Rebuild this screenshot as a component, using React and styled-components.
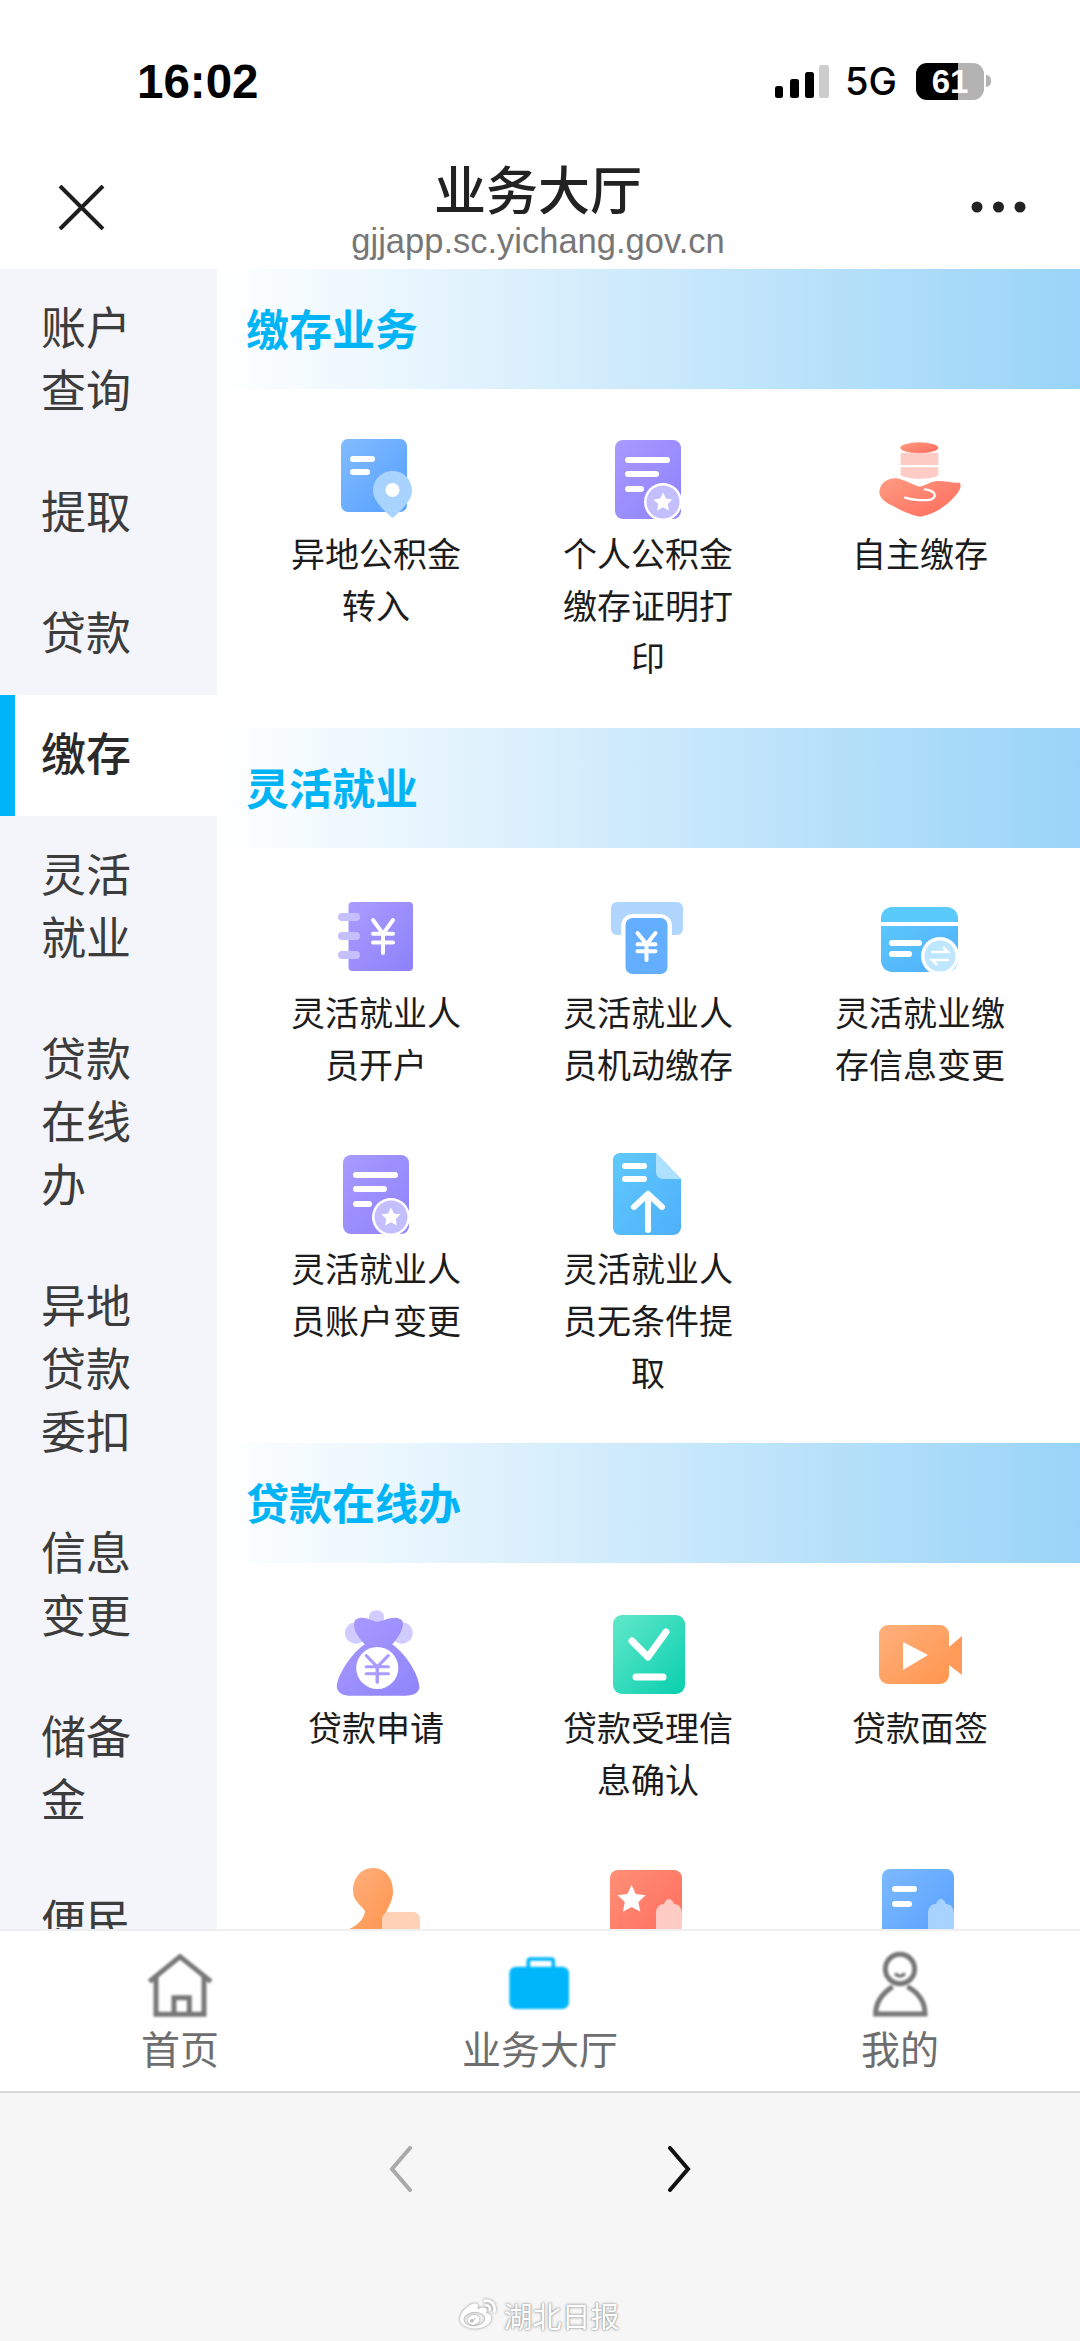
import styled, {createGlobalStyle} from "styled-components";
import {FaWeibo} from "react-icons/fa";

const sideItems = [
  {label: "账户查询"},
  {label: "提取"},
  {label: "贷款"},
  {label: "缴存", active: true},
  {label: "灵活就业"},
  {label: "贷款在线办"},
  {label: "异地贷款委扣"},
  {label: "信息变更"},
  {label: "储备金"},
  {label: "便民"},
];

const Grad = ({id, from, to}) => (
  <defs>
    <linearGradient id={id} x1="0" y1="0" x2="1" y2="1">
      <stop offset="0" stopColor={from}/>
      <stop offset="1" stopColor={to}/>
    </linearGradient>
  </defs>
);

const Yen = ({cx, top, bottom, w, color, sw = 5}) => {
  const mid = top + (bottom - top) * 0.42;
  const bar2 = top + (bottom - top) * 0.68;
  return (
    <path
      d={`M${cx - w} ${top}L${cx} ${mid}L${cx + w} ${top}M${cx - w} ${mid}H${cx + w}M${cx - w} ${bar2}H${cx + w}M${cx} ${mid}V${bottom}`}
      fill="none"
      stroke={color}
      strokeWidth={sw}
      strokeLinecap="round"
      strokeLinejoin="round"
    />
  );
};

const Bars = ({lines, color = "#fff", h = 6}) => lines.map(([x1, x2, y]) => (
  <line key={y} x1={x1} x2={x2} y1={y} y2={y} stroke={color} strokeWidth={h} strokeLinecap="round"/>
));

const PinDoc = () => (
  <IconSvg viewBox="0 0 100 90">
    <Grad id="pd" from="#82bcff" to="#559fff"/>
    <rect x="15" y="0" width="66" height="73" rx="7" fill="url(#pd)"/>
    <Bars lines={[[27, 46, 20], [27, 41, 33]]}/>
    <path d="M66.5 32C78 32 86 41 86 52C86 61 76 71 66.5 79C57 71 47 61 47 52C47 41 55 32 66.5 32Z" fill="#a9d3ff"/>
    <circle cx="66.5" cy="51" r="7" fill="#fff"/>
  </IconSvg>
);

const StarDoc = ({id = "sd"}) => (
  <IconSvg viewBox="0 0 100 90">
    <Grad id={id} from="#a79aff" to="#8f82fb"/>
    <rect x="17" y="1" width="66" height="79" rx="8" fill={`url(#${id})`}/>
    <Bars lines={[[30, 69, 21], [30, 58, 35], [30, 43, 50]]}/>
    <circle cx="65" cy="63" r="19" fill="#fff"/>
    <circle cx="65" cy="63" r="16.5" fill="#c3bfff"/>
    <path d="M65 53.5l2.9 6 6.6.9-4.8 4.6 1.2 6.5-5.9-3.2-5.9 3.2 1.2-6.5-4.8-4.6 6.6-.9Z" fill="#fff"/>
  </IconSvg>
);

const HandDb = () => (
  <IconSvg viewBox="0 0 100 90">
    <Grad id="hd" from="#ff9c82" to="#ff6a5c"/>
    <g transform="translate(0,-9) scale(.3333)">
      <path d="M92 68H205V105H92Z" fill="#ffcbc5"/>
      <path d="M92 112H205V135C190 150 110 150 92 135Z" fill="#ffcbc5"/>
      <ellipse cx="148" cy="53" rx="57" ry="16" fill="url(#hd)"/>
      <path d="M28 185C30 160 50 146 75 145C100 146 125 164 150 170C165 168 180 156 195 154C215 150 245 160 270 158C277 175 262 192 247 207C227 228 195 252 150 260C115 254 85 236 65 226C40 214 28 200 28 185Z" fill="url(#hd)"/>
      <path d="M105 203C130 212 165 212 185 208C200 200 198 182 165 178" fill="none" stroke="#fff" strokeWidth="7" strokeLinecap="round"/>
    </g>
  </IconSvg>
);

const Notebook = () => (
  <IconSvg viewBox="0 0 100 90">
    <Grad id="nb" from="#a99cff" to="#8e81fa"/>
    <rect x="22.5" y="4" width="64.5" height="69" rx="4" fill="url(#nb)"/>
    <Bars lines={[[16, 30, 19], [16, 30, 38], [16, 30, 57]]} color="#c5bffd" h={8}/>
    <Yen cx={57} top={22} bottom={55} w={10} color="#fff" sw={4}/>
  </IconSvg>
);

const AtmCash = () => (
  <IconSvg viewBox="0 0 100 90">
    <rect x="13" y="4" width="72" height="33" rx="6" fill="#b0d6ff"/>
    <rect x="23" y="16" width="51" height="60" rx="12" fill="#fff"/>
    <rect x="27.5" y="20" width="42" height="56" rx="7" fill="#64aeff"/>
    <Yen cx={48.5} top={35} bottom={62} w={9} color="#fff" sw={4}/>
  </IconSvg>
);

const CardSwap = () => (
  <IconSvg viewBox="0 0 100 90">
    <Grad id="cs" from="#5cc6fb" to="#4fb0fb"/>
    <path d="M11 24V20C11 14 16 9 22 9H77C83 9 88 14 88 20V24Z" fill="#5ac9fb"/>
    <path d="M11 28H88V62C88 69 83 74 77 74H22C16 74 11 69 11 62Z" fill="url(#cs)"/>
    <Bars lines={[[22, 49, 45], [22, 39, 56]]}/>
    <circle cx="70" cy="58" r="19" fill="#fff"/>
    <circle cx="70" cy="58" r="15.5" fill="#bfe6ff"/>
    <path d="M61 54H78L73 49M79 62H62L67 67" fill="none" stroke="#fff" strokeWidth="2.5"/>
  </IconSvg>
);

const UploadDoc = () => (
  <IconSvg viewBox="0 0 100 90">
    <Grad id="ud" from="#5fc9fb" to="#4fb0fb"/>
    <path d="M22 -1H58L83 25V73C83 78 79 81 75 81H22C18 81 15 78 15 73V6C15 2 18 -1 22 -1Z" fill="url(#ud)"/>
    <path d="M58 -1L83 25H66C61 25 58 22 58 18Z" fill="#aee0ff"/>
    <Bars lines={[[27, 46, 12], [27, 46, 25]]}/>
    <path d="M36 53L50 40L64 53M50 41V76" fill="none" stroke="#fff" strokeWidth="6" strokeLinecap="round" strokeLinejoin="round"/>
  </IconSvg>
);

const MoneyBag = () => (
  <IconSvg viewBox="0 0 100 90">
    <Grad id="mb" from="#a99bff" to="#8f84fb"/>
    <g transform="translate(-8,-8) scale(.39,.3333)">
      <ellipse cx="97" cy="84" rx="28" ry="32" fill="#d0ccff"/>
      <ellipse cx="215" cy="84" rx="28" ry="32" fill="#d0ccff"/>
      <ellipse cx="150" cy="36" rx="20" ry="20" fill="#d0ccff"/>
      <path d="M95 45C115 28 135 48 152 50C170 48 195 28 215 45C225 65 205 100 190 118C225 145 262 215 260 250C255 268 240 272 225 272H85C65 272 50 265 48 245C50 210 85 145 120 118C105 100 85 70 95 45Z" fill="url(#mb)"/>
      <ellipse cx="152" cy="189" rx="54" ry="63" fill="#fff"/>
      <Yen cx={152} top={152} bottom={232} w={28} color="#a99bff" sw={9}/>
    </g>
  </IconSvg>
);

const CheckPad = () => (
  <IconSvg viewBox="0 0 100 90">
    <Grad id="cp" from="#62e8ca" to="#08cfae"/>
    <rect x="15" y="2" width="72" height="79" rx="9" fill="url(#cp)"/>
    <path d="M34 28L50 44L68 19" fill="none" stroke="#fff" strokeWidth="7" strokeLinecap="round" strokeLinejoin="round"/>
    <Bars lines={[[38, 65, 64]]} h={7}/>
  </IconSvg>
);

const VideoCam = () => (
  <IconSvg viewBox="0 0 100 90">
    <Grad id="vc" from="#ffb07c" to="#ff954f"/>
    <rect x="9" y="12" width="70" height="59" rx="9" fill="url(#vc)"/>
    <path d="M79 34L92 23V62L79 52Z" fill="#ff9a58"/>
    <path d="M33 29L58 42L33 57Z" fill="#fff"/>
  </IconSvg>
);

const Stamp = () => (
  <IconSvg viewBox="0 0 100 90">
    <Grad id="st" from="#ffb07c" to="#ff954f"/>
    <path d="M47 -1C60 -1 67 10 67 22C67 32 62 38 59 46V60H23C32 56 38 50 39 42C35 36 27 32 27 22C27 10 34 -1 47 -1Z" fill="url(#st)"/>
    <rect x="56" y="43" width="38" height="40" rx="7" fill="#ffd2b8"/>
  </IconSvg>
);

const StarCard = () => (
  <IconSvg viewBox="0 0 100 90">
    <Grad id="sc" from="#ff8f76" to="#ff6a5c"/>
    <rect x="12" y="1" width="72" height="79" rx="8" fill="url(#sc)"/>
    <path d="M33.6 16l4.2 9 9.8 1.2-7.2 6.8 1.9 9.8-8.7-4.8-8.7 4.8 1.9-9.8-7.2-6.8 9.8-1.2Z" fill="#fff"/>
    <path d="M58 80V44C58 38 62 35 66 35C67 32 69 30 71 30C73 30 75 32 76 35C81 35 84 39 84 45V80Z" fill="#ffcbc5"/>
  </IconSvg>
);

const BlueHandDoc = () => (
  <IconSvg viewBox="0 0 100 90">
    <Grad id="bh" from="#7cb9ff" to="#559fff"/>
    <rect x="12" y="0" width="72" height="80" rx="8" fill="url(#bh)"/>
    <Bars lines={[[25, 44, 20], [25, 39, 35]]}/>
    <path d="M58 80V44C58 38 62 35 66 35C67 32 69 30 71 30C73 30 75 32 76 35C81 35 84 39 84 45V80Z" fill="#a8d2ff"/>
  </IconSvg>
);

const sections = [
  {
    title: "缴存业务",
    items: [
      {id: "pin", label: "异地公积金转入", Icon: PinDoc},
      {id: "proof", label: "个人公积金缴存证明打印", Icon: () => <StarDoc id="sd1"/>},
      {id: "self", label: "自主缴存", Icon: HandDb},
    ],
  },
  {
    title: "灵活就业",
    items: [
      {id: "open", label: "灵活就业人员开户", Icon: Notebook},
      {id: "pay", label: "灵活就业人员机动缴存", Icon: AtmCash},
      {id: "info", label: "灵活就业缴存信息变更", Icon: CardSwap},
      {id: "acct", label: "灵活就业人员账户变更", Icon: () => <StarDoc id="sd2"/>},
      {id: "draw", label: "灵活就业人员无条件提取", Icon: UploadDoc},
    ],
  },
  {
    title: "贷款在线办",
    items: [
      {id: "apply", label: "贷款申请", Icon: MoneyBag},
      {id: "confirm", label: "贷款受理信息确认", Icon: CheckPad},
      {id: "sign", label: "贷款面签", Icon: VideoCam},
      {id: "stamp", Icon: Stamp},
      {id: "card", Icon: StarCard},
      {id: "hand", Icon: BlueHandDoc},
    ],
  },
];

export default function App() {
  return (
    <Page>
      <GlobalStyle/>
      <StatusBar>
        <Time>16:02</Time>
        <StatusRight>
          <svg width="54" height="33" viewBox="0 0 54 33">
            <rect x="0" y="21" width="8" height="12" rx="2.5" fill="#000"/>
            <rect x="15" y="14" width="9" height="19" rx="2.5" fill="#000"/>
            <rect x="30" y="7" width="9" height="26" rx="2.5" fill="#000"/>
            <rect x="44" y="0" width="10" height="33" rx="2.5" fill="#ccc"/>
          </svg>
          <Network>5G</Network>
          <Battery>61</Battery>
        </StatusRight>
      </StatusBar>

      <NavBar>
        <CloseIcon viewBox="0 0 47 45">
          <path d="M2 1L45 44M45 1L2 44" stroke="#1e1e1e" strokeWidth="4" fill="none"/>
        </CloseIcon>
        <TitleStack>
          <Title>业务大厅</Title>
          <Url>gjjapp.sc.yichang.gov.cn</Url>
        </TitleStack>
        <MoreIcon viewBox="0 0 55 12">
          <circle cx="6" cy="6" r="5.5" fill="#222"/>
          <circle cx="27.5" cy="6" r="5.5" fill="#222"/>
          <circle cx="49" cy="6" r="5.5" fill="#222"/>
        </MoreIcon>
      </NavBar>

      <Main>
        <Sidebar>
          {sideItems.map(item => (
            <SideItem key={item.label} active={item.active}>
              <SideLabel>{item.label}</SideLabel>
            </SideItem>
          ))}
        </Sidebar>
        <Content>
          {sections.map(section => (
            <section key={section.title}>
              <Banner>{section.title}</Banner>
              <Grid>
                {section.items.map(({id, label, Icon}) => (
                  <Cell key={id}>
                    <IconSlot><Icon/></IconSlot>
                    {label && <CellLabel>{label}</CellLabel>}
                  </Cell>
                ))}
              </Grid>
            </section>
          ))}
        </Content>
      </Main>

      <TabBar>
        <Tab>
          <TabIcon viewBox="0 0 100 80">
            <g transform="scale(.3333)" fill="none" stroke="#777" strokeWidth="15">
              <path d="M58 110L150 35L243 110"/>
              <path d="M78 92V208H222V92"/>
              <path d="M132 208V158H178V208"/>
            </g>
          </TabIcon>
          <TabLabel>首页</TabLabel>
        </Tab>
        <Tab>
          <TabIcon viewBox="0 0 100 80">
            <g transform="translate(5,0) scale(.3333)">
              <rect x="100" y="42" width="75" height="40" rx="6" fill="none" stroke="#00b6fb" strokeWidth="11"/>
              <rect x="43" y="65" width="179" height="127" rx="20" fill="#00b6fb"/>
            </g>
          </TabIcon>
          <TabLabel>业务大厅</TabLabel>
        </Tab>
        <Tab>
          <TabIcon viewBox="0 0 100 80">
            <g transform="translate(10,0) scale(.3333)" fill="none" stroke="#777" strokeWidth="15">
              <circle cx="120" cy="72" r="44"/>
              <path d="M105 85Q120 102 135 85" strokeWidth="10"/>
              <path d="M98 125C75 140 47 165 47 207H195C195 165 170 140 142 125"/>
            </g>
          </TabIcon>
          <TabLabel>我的</TabLabel>
        </Tab>
      </TabBar>

      <BrowserBar>
        <Chevron viewBox="0 0 24 46">
          <path d="M21 2L3 23L21 44" stroke="#aaa" strokeWidth="4" fill="none" strokeLinecap="round"/>
        </Chevron>
        <Chevron viewBox="0 0 24 46">
          <path d="M3 2L21 23L3 44" stroke="#111" strokeWidth="4" fill="none" strokeLinecap="round"/>
        </Chevron>
        <Watermark>
          <FaWeibo size={36}/>
          <span>湖北日报</span>
        </Watermark>
      </BrowserBar>
    </Page>
  );
}

const GlobalStyle = createGlobalStyle`
  html, body {
    margin: 0;
    padding: 0;
    background: #fff;
  }
  * {
    box-sizing: border-box;
  }
  section {
    display: block;
  }
`;

const Page = styled.div`
  width: 1080px;
  height: 2341px;
  display: flex;
  flex-direction: column;
  overflow: hidden;
  font-family: "Noto Sans CJK SC", "Liberation Sans", sans-serif;
  color: #222;
`;

const StatusBar = styled.div`
  height: 120px;
  padding: 42px 96px 0 137px;
  display: flex;
  justify-content: space-between;
  align-items: center;
  flex-shrink: 0;
`;

const Time = styled.div`
  font-family: "Liberation Sans", sans-serif;
  font-weight: 700;
  font-size: 47.5px;
  color: #000;
`;

const StatusRight = styled.div`
  display: flex;
  align-items: center;
  gap: 19px;
`;

const Network = styled.div`
  margin-left: -3px;
  font-family: Inter, sans-serif;
  font-weight: 500;
  font-size: 38px;
  color: #000;
`;

const Battery = styled.div`
  position: relative;
  width: 68px;
  height: 37px;
  border-radius: 11px;
  background: linear-gradient(90deg, #000 62%, #b3b3b3 62%);
  color: #fff;
  font-family: "Liberation Sans", sans-serif;
  font-weight: 700;
  font-size: 33px;
  line-height: 37px;
  text-align: center;

  &::after {
    content: "";
    position: absolute;
    right: -7px;
    top: 12px;
    width: 5px;
    height: 12px;
    border-radius: 0 6px 6px 0;
    background: #b3b3b3;
  }
`;

const NavBar = styled.div`
  height: 149px;
  padding: 0 58px 0 54px;
  display: grid;
  grid-template-columns: 1fr auto 1fr;
  flex-shrink: 0;
`;

const CloseIcon = styled.svg`
  width: 47px;
  height: 45px;
  margin: 65px 0 0 4px;
`;

const MoreIcon = styled.svg`
  width: 55px;
  height: 12px;
  margin: 81px -4px 0 0;
  justify-self: end;
`;

const TitleStack = styled.div`
  padding-top: 38px;
  display: flex;
  flex-direction: column;
  align-items: center;
`;

const Title = styled.div`
  font-size: 52px;
  font-weight: 500;
  line-height: 60px;
  color: #222;
`;

const Url = styled.div`
  margin-top: 3px;
  font-family: "Liberation Sans", sans-serif;
  font-size: 34.5px;
  line-height: 40px;
  color: #777;
`;

const Main = styled.div`
  height: 1660px;
  display: flex;
  overflow: hidden;
  flex-shrink: 0;
`;

const Sidebar = styled.div`
  width: 217px;
  flex-shrink: 0;
  background: #f3f5fa;
`;

const SideItem = styled.div.withConfig({shouldForwardProp: p => p !== "active"})`
  position: relative;
  padding: 25px 0 33px 41px;
  background: ${({active}) => active ? "#fff" : "transparent"};
  color: ${({active}) => active ? "#2a2a2a" : "#3c3c3c"};
  font-weight: ${({active}) => active ? 500 : 400};

  &::before {
    content: "";
    display: ${({active}) => active ? "block" : "none"};
    position: absolute;
    left: 0;
    top: 0;
    bottom: 0;
    width: 15px;
    background: #00b4f8;
  }
`;

const SideLabel = styled.div`
  width: 100px;
  font-size: 45px;
  line-height: 63px;
`;

const Content = styled.div`
  flex: 1;
  min-width: 0;
`;

const Banner = styled.div`
  height: 120px;
  padding: 0 0 4px 29px;
  display: flex;
  align-items: center;
  background: linear-gradient(90deg, #fff 0%, #99d4f8 100%);
  color: #00b4f5;
  font-size: 43px;
  font-weight: 700;
`;

const Grid = styled.div`
  padding: 50px 24px 45px 23px;
  display: grid;
  grid-template-columns: repeat(3, 272px);
  row-gap: 64px;
`;

const Cell = styled.div`
  display: flex;
  flex-direction: column;
  align-items: center;
`;

const IconSlot = styled.div`
  width: 100px;
  height: 88px;
`;

const IconSvg = styled.svg`
  display: block;
  width: 100px;
  height: 90px;
  overflow: visible;
  filter: blur(0.5px);
`;

const CellLabel = styled.div`
  width: 176px;
  font-size: 34px;
  line-height: 52px;
  text-align: center;
  color: #1c1c1c;
`;

const TabBar = styled.div`
  height: 162px;
  border-top: 2px solid #efefef;
  display: grid;
  grid-template-columns: repeat(3, 1fr);
  background: #fff;
  flex-shrink: 0;
`;

const Tab = styled.div`
  padding-top: 14px;
  display: flex;
  flex-direction: column;
  align-items: center;
`;

const TabIcon = styled.svg`
  width: 100px;
  height: 80px;
  filter: blur(0.8px);
`;

const TabLabel = styled.div`
  margin-top: -3px;
  font-size: 39px;
  line-height: 50px;
  color: #6e6e6e;
`;

const BrowserBar = styled.div`
  position: relative;
  flex: 1;
  border-top: 2px solid #d8d8d8;
  background: #f6f6f6;
  padding-top: 53px;
  display: flex;
  justify-content: center;
  align-items: flex-start;
  gap: 254px;
`;

const Chevron = styled.svg`
  width: 24px;
  height: 46px;
`;

const Watermark = styled.div`
  position: absolute;
  left: 0;
  right: 0;
  bottom: 6px;
  display: flex;
  justify-content: center;
  align-items: center;
  gap: 7px;
  color: #fff;
  font-size: 29px;
  line-height: 40px;
  text-shadow: 0 0 3px #8a8a8a, 0 0 1px #8a8a8a;

  svg {
    filter: drop-shadow(0 0 1.5px #8a8a8a);
  }
`;
